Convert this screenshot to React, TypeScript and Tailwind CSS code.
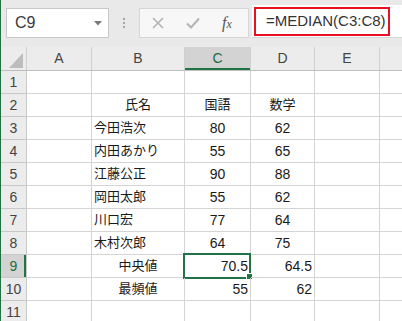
import { Fragment } from "react";

type Align = "left" | "center" | "right";
type Cell = { text: string; align: Align };

const e: Cell = { text: "", align: "left" };
const ctr = (text: string): Cell => ({ text, align: "center" });
const lft = (text: string): Cell => ({ text, align: "left" });
const rgt = (text: string): Cell => ({ text, align: "right" });

const rows: { n: number; b: Cell; c: Cell; d: Cell }[] = [
  { n: 1, b: e, c: e, d: e },
  { n: 2, b: ctr("氏名"), c: ctr("国語"), d: ctr("数学") },
  { n: 3, b: lft("今田浩次"), c: ctr("80"), d: ctr("62") },
  { n: 4, b: lft("内田あかり"), c: ctr("55"), d: ctr("65") },
  { n: 5, b: lft("江藤公正"), c: ctr("90"), d: ctr("88") },
  { n: 6, b: lft("岡田太郎"), c: ctr("55"), d: ctr("62") },
  { n: 7, b: lft("川口宏"), c: ctr("77"), d: ctr("64") },
  { n: 8, b: lft("木村次郎"), c: ctr("64"), d: ctr("75") },
  { n: 9, b: ctr("中央値"), c: rgt("70.5"), d: rgt("64.5") },
  { n: 10, b: ctr("最頻値"), c: rgt("55"), d: rgt("62") },
  { n: 11, b: e, c: e, d: e },
];

const alignCls: Record<Align, string> = {
  left: "justify-start pl-[2px]",
  center: "justify-center",
  right: "justify-end pr-[2px]",
};

const font = { fontFamily: '"Liberation Sans", "Noto Sans CJK JP", sans-serif' };

const DataCell = ({ cell, w, selected }: { cell: Cell; w: string; selected?: boolean }) => {
  const isNum = /^[0-9.]+$/.test(cell.text);
  return (
    <div
      className={`${w} relative h-[23px] shrink-0 flex items-center border-r border-b border-[#d4d4d4] text-[#1a1a1a] ${alignCls[cell.align]} ${isNum ? "text-[14px]" : "text-[13px]"}`}
    >
      {cell.text}
      {selected && (
        <>
          <div className="absolute -left-[2px] -top-[2px] w-[68px] h-[26px] border-2 border-[#217346]" />
          <div className="absolute left-[61px] top-[18px] w-[7px] h-[7px] bg-[#217346] border border-white" />
        </>
      )}
    </div>
  );
};

export default function App() {
  return (
    <div className="w-[402px] h-[321px] overflow-hidden bg-white border-l border-[#217346] flex flex-col" style={font}>
      {/* formula bar */}
      <div className="h-[47px] shrink-0 bg-[#e9e9e9] flex items-start pt-[5px]">
        <div className="ml-[5px] mt-[3px] w-[103px] h-[30px] bg-white border border-[#c8c8c8] flex items-center pl-[8px] pr-[6px]">
          <span className="text-[16px] text-[#3a3a3a] flex-1">C9</span>
          <svg width="8" height="5" viewBox="0 0 8 5">
            <path d="M0 0 H8 L4 4.5 Z" fill="#7a7a7a" />
          </svg>
        </div>
        <div className="w-[30px] h-[36px] flex flex-col items-center justify-center gap-[2px]">
          <span className="w-[2px] h-[2px] bg-[#a6a6a6]" />
          <span className="w-[2px] h-[2px] bg-[#a6a6a6]" />
          <span className="w-[2px] h-[2px] bg-[#a6a6a6]" />
        </div>
        <div className="mt-[3px] w-[110px] h-[30px] bg-[#f7f7f7] border border-[#d6d6d6] flex items-center">
          <svg className="ml-[12px]" width="12" height="12" viewBox="0 0 12 12">
            <path d="M1 1 L11 11 M11 1 L1 11" stroke="#b3b3b3" strokeWidth="1.6" />
          </svg>
          <svg className="ml-[22px]" width="14" height="12" viewBox="0 0 14 12">
            <path d="M1 6.5 L5 10.5 L13 1.5" stroke="#b3b3b3" strokeWidth="2" fill="none" />
          </svg>
          <span
            className="ml-[22px] text-[16px] italic text-[#555]"
            style={{ fontFamily: '"Liberation Serif", serif' }}
          >
            f<span className="text-[12px]">x</span>
          </span>
        </div>
        <div className="ml-[3px] flex-1 h-[33px] bg-white border-b border-[#d6d6d6] pl-[2px] pt-[2px]">
          <div className="w-[136px] h-[29px] border-2 border-[#e81123] flex items-center pl-[10px] text-[15px] text-[#333] whitespace-nowrap">
            =MEDIAN(C3:C8)
          </div>
        </div>
      </div>

      {/* column headers */}
      <div className="h-[24px] shrink-0 flex bg-[#ececec] border-b border-[#bfbfbf] text-[14px] text-[#444]">
        <div className="w-[26px] shrink-0 border-r border-[#d0d0d0] flex items-end justify-end pr-[3px] pb-[2px]">
          <svg width="14" height="15" viewBox="0 0 14 15">
            <path d="M14 0 V15 H0 Z" fill="#bdbdbd" />
          </svg>
        </div>
        <div className="w-[65px] shrink-0 border-r border-[#d0d0d0] flex items-center justify-center">A</div>
        <div className="w-[93px] shrink-0 border-r border-[#d0d0d0] flex items-center justify-center">B</div>
        <div className="w-[66px] shrink-0 border-r border-[#d0d0d0] flex items-center justify-center bg-[#d3d3d3] text-[#1e6b42] shadow-[inset_0_-2px_0_#217346]">
          C
        </div>
        <div className="w-[64px] shrink-0 border-r border-[#d0d0d0] flex items-center justify-center">D</div>
        <div className="w-[65px] shrink-0 border-r border-[#d0d0d0] flex items-center justify-center">E</div>
        <div className="flex-1" />
      </div>

      {/* grid */}
      <div className="flex flex-col">
        {rows.map((r) => (
          <Fragment key={r.n}>
            <div className="flex">
              <div
                className={`w-[26px] h-[23px] shrink-0 flex items-center justify-center border-r border-b border-[#c8c8c8] text-[14px] ${
                  r.n === 9
                    ? "bg-[#d3d3d3] text-[#1e6b42] shadow-[inset_-2px_0_0_#217346]"
                    : "bg-[#ececec] text-[#444]"
                }`}
              >
                {r.n}
              </div>
              <DataCell cell={e} w="w-[65px]" />
              <DataCell cell={r.b} w="w-[93px]" />
              <DataCell cell={r.c} w="w-[66px]" selected={r.n === 9} />
              <DataCell cell={r.d} w="w-[64px]" />
              <DataCell cell={e} w="w-[65px]" />
              <div className="flex-1 h-[23px] border-b border-[#d4d4d4]" />
            </div>
          </Fragment>
        ))}
      </div>
    </div>
  );
}
